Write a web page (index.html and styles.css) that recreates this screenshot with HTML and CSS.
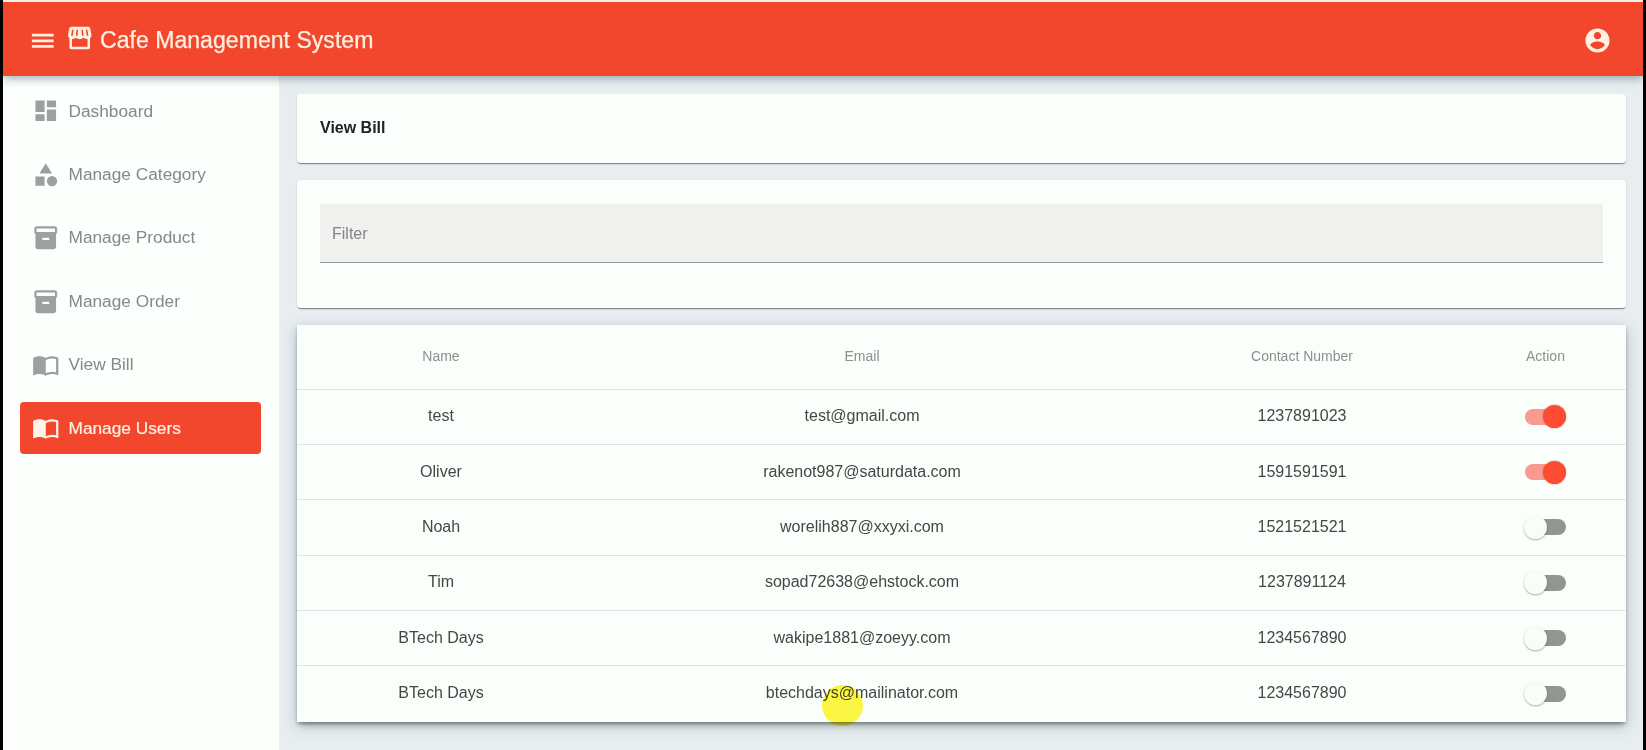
FILE: index.html
```html
<!DOCTYPE html>
<html lang="en">
<head>
<meta charset="utf-8">
<title>Cafe Management System</title>
<link rel="stylesheet" href="styles.css">
</head>
<body>
<svg class="defs" width="0" height="0">
  <symbol id="i-menu" viewBox="0 0 24 24"><path d="M2.500 18.200h19v-2.400h-19zm0-5h19v-2.400h-19zm0-7.400v2.400h19V5.800z"/></symbol>
  <symbol id="i-store" viewBox="0 0 24 24"><path fill-rule="evenodd" d="M4.600 2.500h14.800q1.500 0 1.800 1.400l1 5.300q.3 2-1.200 3v8.300q0 1.500-1.500 1.500h-15Q3 22 3 20.500v-8.300q-1.500-1-1.200-3l1-5.300q.3-1.400 1.800-1.400zM5.200 13v6.800h13.600V13q-1.900.3-3.400-1-1.600 1.300-3.400 1.300T8.600 12q-1.500 1.300-3.400 1zM5.400 5l-1 5.200h1.500L6.700 5zM9.200 5l-.6 5.200h1.500L10.500 5zM13.500 5l.4 5.200h1.500L14.800 5zM17.300 5l.8 5.200h1.500l-1-5.200z"/></symbol>
  <symbol id="i-account" viewBox="0 0 24 24"><path d="M12 2C6.480 2 2 6.480 2 12s4.480 10 10 10 10-4.480 10-10S17.520 2 12 2zm0 3c1.660 0 3 1.340 3 3s-1.340 3-3 3-3-1.340-3-3 1.340-3 3-3zm0 14.200c-2.500 0-4.710-1.280-6-3.220.030-1.990 4-3.080 6-3.080 1.990 0 5.970 1.090 6 3.080-1.290 1.940-3.500 3.220-6 3.220z"/></symbol>
  <symbol id="i-dashboard" viewBox="0 0 24 24"><path d="M3 13h8V3H3v10zm0 8h8v-6H3v6zm10 0h8V11h-8v10zm0-18v6h8V3h-8z"/></symbol>
  <symbol id="i-category" viewBox="0 0 24 24"><path d="M12 2l-5.500 9h11z"/><circle cx="17.500" cy="17.500" r="4.500"/><path d="M3 13.500h8v8H3z"/></symbol>
  <symbol id="i-box" viewBox="0 0 24 24"><path d="M20 2H4c-1 0-2 .9-2 2v3.010c0 .720.430 1.340 1 1.690V20c0 1.100 1.100 2 2 2h14c.9 0 2-.9 2-2V8.700c.570-.350 1-.970 1-1.690V4c0-1.100-1-2-2-2zm-5 12H9v-2h6v2zm5-7H4V4h16v3z"/></symbol>
  <symbol id="i-book" viewBox="0 0 24 24"><path d="M21 5c-1.110-.350-2.330-.5-3.500-.5-1.950 0-4.050.4-5.500 1.500-1.450-1.100-3.550-1.500-5.500-1.500S2.450 4.900 1 6v14.650c0 .250.250.5.5.5.100 0 .150-.050.250-.050C3.100 20.450 5.050 20 6.500 20c1.950 0 4.050.4 5.500 1.500 1.350-.850 3.800-1.500 5.500-1.500 1.650 0 3.350.3 4.750 1.050.100.050.150.050.250.050.250 0 .5-.250.5-.5V6c-.6-.450-1.250-.750-2-1zm0 13.500c-1.100-.350-2.300-.5-3.500-.5-1.700 0-4.150.650-5.500 1.500V8c1.350-.850 3.800-1.500 5.500-1.500 1.200 0 2.400.150 3.500.5v11.500z"/></symbol>
</svg>
<div class="app">
  <header class="toolbar">
    <svg class="icon menu"><use href="#i-menu"/></svg>
    <svg class="icon store"><use href="#i-store"/></svg>
    <h1 class="brand">Cafe Management System</h1>
    <svg class="icon account"><use href="#i-account"/></svg>
  </header>
  <div class="body">
    <nav class="sidebar">
      <a class="item"><svg class="icon"><use href="#i-dashboard"/></svg><span>Dashboard</span></a>
      <a class="item"><svg class="icon"><use href="#i-category"/></svg><span>Manage Category</span></a>
      <a class="item"><svg class="icon"><use href="#i-box"/></svg><span>Manage Product</span></a>
      <a class="item"><svg class="icon"><use href="#i-box"/></svg><span>Manage Order</span></a>
      <a class="item"><svg class="icon"><use href="#i-book"/></svg><span>View Bill</span></a>
      <a class="item active"><svg class="icon"><use href="#i-book"/></svg><span>Manage Users</span></a>
    </nav>
    <main class="content">
      <section class="card title-card"><b>View Bill</b></section>
      <section class="card filter-card"><div class="field">Filter</div></section>
      <section class="table">
        <div class="row head"><span>Name</span><span>Email</span><span>Contact Number</span><span>Action</span></div>
        <div class="row"><span>test</span><span>test@gmail.com</span><span>1237891023</span><span><i class="toggle on"></i></span></div>
        <div class="row"><span>Oliver</span><span>rakenot987@saturdata.com</span><span>1591591591</span><span><i class="toggle on"></i></span></div>
        <div class="row"><span>Noah</span><span>worelih887@xxyxi.com</span><span>1521521521</span><span><i class="toggle"></i></span></div>
        <div class="row"><span>Tim</span><span>sopad72638@ehstock.com</span><span>1237891124</span><span><i class="toggle"></i></span></div>
        <div class="row"><span>BTech Days</span><span>wakipe1881@zoeyy.com</span><span>1234567890</span><span><i class="toggle"></i></span></div>
        <div class="row"><span>BTech Days</span><span class="pointed">btechdays@mailinator.com<i class="pointer"></i></span><span>1234567890</span><span><i class="toggle"></i></span></div>
      </section>
    </main>
  </div>
</div>
</body>
</html>
```
FILE: styles.css
```css
* { box-sizing: border-box; }
body {
  margin: 0;
  background: #000;
  font-family: "Liberation Sans", Arial, sans-serif;
  font-size: 16px;
  color: #454745;
}
.defs { display: block; height: 0; }
.app {
  height: 750px;
  margin: 0 3px;
  border-top: 2px solid #f3eee8;
  display: flex;
  flex-direction: column;
  overflow: hidden;
  background: #e8eef0;
}
.icon { width: 27.500px; height: 27.500px; fill: currentColor; flex: none; }
.toolbar {
  position: relative;
  height: 74px;
  flex: none;
  display: flex;
  align-items: center;
  padding: 3px 31px 0 26px;
  background: #f2472d;
  color: #fff0e0;
  box-shadow: 0 2px 9px rgba(50, 80, 100, .5);
  z-index: 1;
}
.menu { margin-right: 9px; }
.store { margin: -5px 7px 0 0; }
.brand { margin: 0; font-size: 23.100px; font-weight: 400; white-space: nowrap; -webkit-text-stroke: .25px currentColor; }
.account { margin-left: auto; width: 29px; height: 29px; }
.body { flex: 1; display: flex; min-height: 0; }
.sidebar {
  width: 275.500px;
  flex: none;
  padding: 9px 18px 0 17px;
  display: flex;
  flex-direction: column;
  gap: 11px;
  background: #fcfffb;
}
.item {
  height: 52.400px;
  flex: none;
  display: flex;
  align-items: center;
  gap: 9px;
  padding: 0 0 0 12px;
  border-radius: 4px;
  font-size: 17.300px;
  color: #858a88;
}
.item .icon { color: #9ba1a1; }
.item.active { background: #f2472d; color: #fff0e4; -webkit-text-stroke: .2px currentColor; }
.active .icon { color: #fff3e8; }
.content { flex: 1; padding: 18px 17px 0 18.500px; }
.card {
  background: #fbfffc;
  border-radius: 4px;
  box-shadow: 0 2px 1px -1px rgba(0, 0, 0, .35), 0 1px 2px rgba(0, 0, 0, .2);
}
.title-card { height: 69px; padding: 24px 23px; line-height: 20px; color: #222; font-size: 16px; }
.filter-card { height: 128px; margin-top: 17px; padding: 24px 23px 0; }
.field {
  height: 59px;
  padding: 0 12px;
  line-height: 60px;
  background: #f1f2ef;
  border-bottom: 1px solid #999c9b;
  color: #818482;
}
.table {
  margin-top: 17px;
  background: #fbfffb;
  box-shadow: 0 5px 5px -3px rgba(0, 0, 0, .28), 0 4px 13px rgba(30, 50, 65, .28), 0 2px 3px rgba(0, 0, 0, .2);
}
.row {
  display: grid;
  grid-template-columns: 288px 554px 326px 1fr;
  align-items: center;
  height: 55.400px;
  padding-bottom: 1px;
  border-bottom: 1px solid #dfe3e1;
  text-align: center;
}
.row > span { display: block; }
.row:last-child { border-bottom: 0; padding-bottom: 2px; }
.head { height: 64.500px; font-size: 14px; color: #8c918e; }
.toggle {
  display: block;
  position: relative;
  width: 41px;
  height: 16px;
  margin: 1px auto 0;
  border-radius: 8px;
  background: #929692;
}
.toggle::after {
  content: "";
  position: absolute;
  left: -1px;
  top: -3.500px;
  width: 23px;
  height: 23px;
  border-radius: 50%;
  background: #fafcf9;
  box-shadow: 0 1px 2px rgba(0, 0, 0, .32);
}
.toggle.on { background: #f99a90; }
.toggle.on::after { left: 18px; background: #fd4c32; box-shadow: 0 0 2px rgba(160, 50, 40, .5); }
.pointed { position: relative; }
.pointer {
  position: absolute;
  left: 237px;
  top: 1px;
  width: 41px;
  height: 41px;
  border-radius: 50%;
  background: #fff645;
  mix-blend-mode: multiply;
}
```
